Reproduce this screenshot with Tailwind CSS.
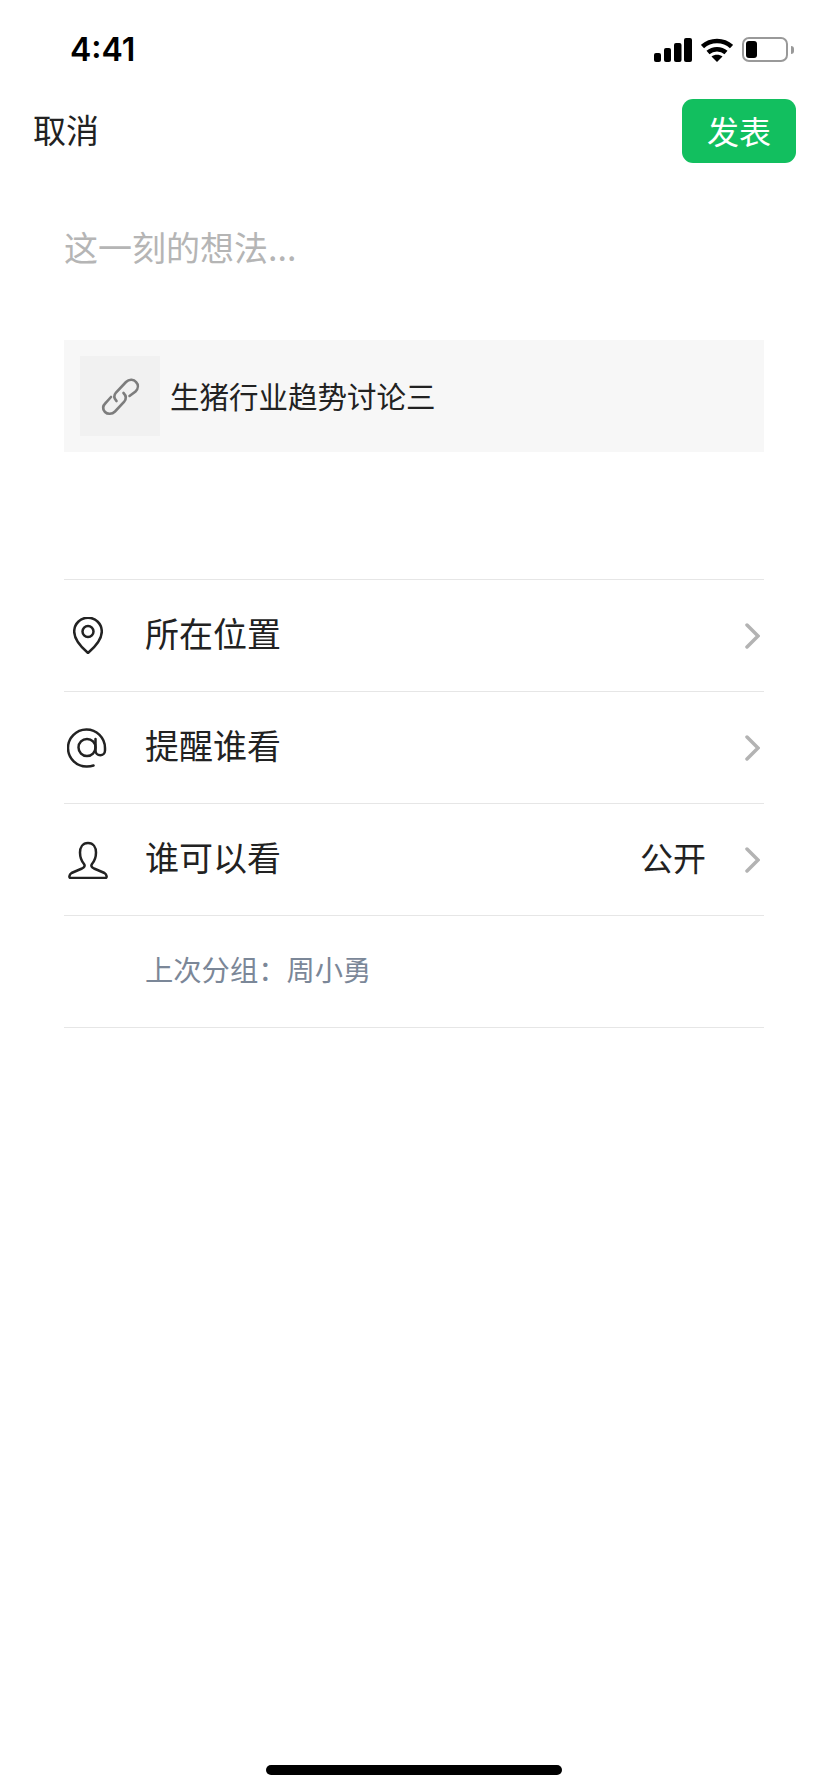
<!DOCTYPE html>
<html lang="zh-CN">

<head>
    <meta charset="UTF-8">
    <title>发表</title>
    <script src="https://cdn.jsdelivr.net/npm/@tailwindcss/browser@4"></script>
</head>

<body class="bg-white font-['Noto_Sans_CJK_SC','Noto_Sans',sans-serif] text-[#222]">
    <div class="relative w-[828px] h-[1792px] overflow-hidden">
        <!-- status bar -->
        <div class="h-[99px] flex items-center justify-between pl-[70px] pr-[34px]">
            <span class="font-['Inter',sans-serif] font-semibold text-[32px] leading-none text-black">4:41</span>
            <div class="flex items-center gap-[9px]">
                <svg width="38" height="24" viewBox="0 0 38 24" fill="#000">
                    <rect x="0" y="15" width="7" height="9" rx="2" />
                    <rect x="10" y="10" width="7" height="14" rx="2" />
                    <rect x="20" y="5" width="7.500" height="19" rx="2" />
                    <rect x="30" y="0" width="8" height="24" rx="2" />
                </svg>
                <svg width="32" height="24" viewBox="0 0 32 24" fill="none" stroke="#000" stroke-width="4.500">
                    <path d="M1.500 8.500C9.500 1 22.500 1 30.500 8.500" />
                    <path d="M7 14.500C12 10 20 10 25 14.500" />
                    <path d="M16 24l-5.500-5.500C13.500 16 18.500 16 21.500 18.500Z" fill="#000" stroke="none" />
                </svg>
                <div class="flex items-center gap-[3px]">
                    <div class="w-[46px] h-[25px] rounded-[7px] border-2 border-[#999] p-[2px]">
                        <div class="w-[11px] h-full rounded-[3px] bg-black"></div>
                    </div>
                    <div class="w-[3px] h-[8px] rounded-r-full bg-[#999]"></div>
                </div>
            </div>
        </div>

        <!-- nav -->
        <div class="h-[64px] flex items-center justify-between pl-[33px] pr-[32px]">
            <span class="text-[33px] leading-none pb-[4px]">取消</span>
            <button class="w-[114px] h-[64px] pb-[2px] rounded-[11px] bg-[#12bf5f] text-white text-[32px] leading-none">发表</button>
        </div>

        <div class="px-[64px]">
            <div class="mt-[55px] h-[60px] pb-[3px] flex items-center text-[34px] leading-none text-[#b5b5b5]">这一刻的想法...</div>

            <!-- link card -->
            <div class="mt-[62px] h-[112px] bg-[#f7f7f7] flex items-center pl-[16px] pb-[1px]">
                <div class="w-[80px] h-[80px] bg-[#f1f1f1] flex items-center justify-center">
                    <svg width="50" height="50" viewBox="0 0 50 50" fill="none" stroke="#7d7d7d" stroke-width="2.600" stroke-linecap="round">
                        <path d="M21.500 30C18.500 27 18.500 24.500 21 21.500L31 11C34.500 7.500 39 8.500 41 11 43.500 13.500 43.500 17.500 40.500 20.500L34.500 25" />
                        <path d="M16 26 11 31.500C7.500 35 7.500 38.500 10 41 12.500 43.500 17 43.500 20 40.500L29 31C31.500 28 31.500 25 28.500 22" />
                    </svg>
                </div>
                <span class="ml-[10px] text-[29.500px] leading-none">生猪行业趋势讨论三</span>
            </div>

            <!-- options -->
            <div class="mt-[127px] border-t border-[#e6e6e6] text-[34px] leading-none">
                <div class="h-[112px] border-b border-[#e6e6e6] flex items-center">
                    <div class="w-[81px] pl-[9px]">
                        <svg width="30" height="37" viewBox="0 0 30 37" fill="none" stroke="#222" stroke-width="2.500">
                            <path d="M15 36C8 30 1.200 23 1.200 14.500a13.800 13.800 0 0 1 27.600 0C28.800 23 22 30 15 36Z" stroke-linejoin="round" />
                            <circle cx="15" cy="14.500" r="5.500" />
                        </svg>
                    </div>
                    <span class="pb-[6px]">所在位置</span>
                    <svg class="ml-auto mr-[4px]" width="15" height="26" viewBox="0 0 15 26" fill="none" stroke="#b3b3b3" stroke-width="3.500" stroke-linecap="round">
                        <path d="M2 2 13 13 2 24" />
                    </svg>
                </div>
                <div class="h-[112px] border-b border-[#e6e6e6] flex items-center">
                    <div class="w-[81px] pl-[3px]">
                        <svg width="40" height="40" viewBox="0 0 40 40" fill="none" stroke="#222" stroke-width="2.500" stroke-linecap="round">
                            <circle cx="20" cy="19.500" r="8.500" />
                            <path d="M28.500 11v11.500a4.500 4.500 0 0 0 9.500 0V20A18.500 18.500 0 1 0 20 38.500c2.500 0 4.500-.3 6.500-1" />
                        </svg>
                    </div>
                    <span class="pb-[6px]">提醒谁看</span>
                    <svg class="ml-auto mr-[4px]" width="15" height="26" viewBox="0 0 15 26" fill="none" stroke="#b3b3b3" stroke-width="3.500" stroke-linecap="round">
                        <path d="M2 2 13 13 2 24" />
                    </svg>
                </div>
                <div class="h-[112px] border-b border-[#e6e6e6] flex items-center">
                    <div class="w-[81px] pl-[4px]">
                        <svg width="40" height="38" viewBox="0 0 40 38" fill="none" stroke="#222" stroke-width="2.500" stroke-linejoin="round">
                            <path d="M20 2C14.500 2 12 6.500 12 11.500 12 16 13.500 20 16 23 17.500 25 16 26.500 14 27.500L3.500 32C1 33.500.8 37 2.500 37H37.500C39.200 37 39 33.500 36.500 32L26 27.500C24 26.500 22.500 25 24 23 26.500 20 28 16 28 11.500 28 6.500 25.500 2 20 2Z" />
                        </svg>
                    </div>
                    <span class="pb-[6px]">谁可以看</span>
                    <span class="ml-auto pb-[5px] text-[33px]">公开</span>
                    <svg class="ml-[39px] mr-[4px]" width="15" height="26" viewBox="0 0 15 26" fill="none" stroke="#b3b3b3" stroke-width="3.500" stroke-linecap="round">
                        <path d="M2 2 13 13 2 24" />
                    </svg>
                </div>
                <div class="h-[112px] border-b border-[#e6e6e6] flex items-center pl-[81px] pb-[4px] text-[28.300px] text-[#7b8798]">上次分组：周小勇</div>
            </div>
        </div>

        <!-- home indicator -->
        <div class="absolute left-[266px] top-[1765px] w-[296px] h-[10px] rounded-full bg-black"></div>
    </div>
</body>

</html>
